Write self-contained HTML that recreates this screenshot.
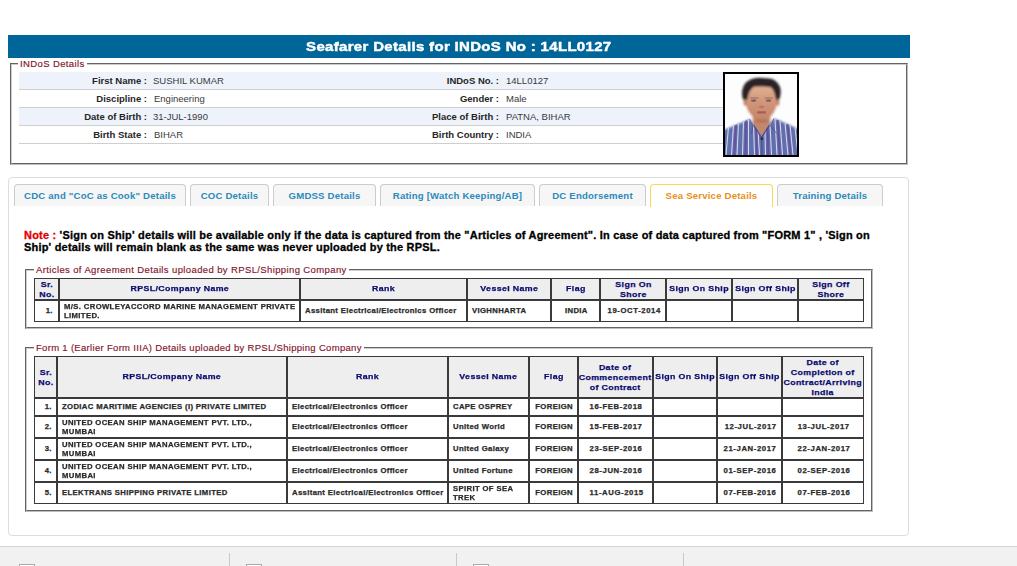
<!DOCTYPE html>
<html>
<head>
<meta charset="utf-8">
<title>Seafarer Details</title>
<style>
html,body{margin:0;padding:0;background:#fff;}
body{width:1017px;height:566px;overflow:hidden;position:relative;font-family:"Liberation Sans",sans-serif;color:#222;}
.a{position:absolute;}
.v{display:inline-block;white-space:nowrap;transform-origin:50% 50%;}
/* header */
#bar{left:8px;top:35px;width:902px;height:23px;background:#006699;}
#title{left:0;top:0;width:902px;height:23px;line-height:23px;text-align:center;color:#fff;font-weight:bold;font-size:13px;}
#tt{letter-spacing:.3px;transform:scaleX(1.15);-webkit-text-stroke:.45px #fff;}
/* fieldsets */
.fs{border:1px solid;border-color:#646464 #bdbdbd #bdbdbd #646464;box-sizing:border-box;}
.fs::after{content:"";position:absolute;left:0;top:0;right:0;bottom:0;border:1px solid;border-color:#cccccc #646464 #646464 #cccccc;}
.fs i{position:absolute;display:block;}
.lg{background:#fff;color:#84142c;-webkit-text-stroke-width:.15px;font-size:9.5px;letter-spacing:.38px;line-height:12px;white-space:nowrap;padding:0 2px;}
/* details rows */
.row{left:19px;width:704px;height:17px;border-bottom:1px solid #cfcfcf;font-size:9.5px;line-height:17px;}
.row.s{background:#eef3fb;}
.row b{position:absolute;right:0;top:0;color:#262626;white-space:nowrap;}
.row span{position:absolute;top:0;color:#3a3a3a;white-space:nowrap;}
/* tabs */
#panel{left:8px;top:177px;width:901px;height:359px;border:1px solid #ddd;border-radius:4px;box-sizing:border-box;}
.tab{top:184px;height:22px;box-sizing:border-box;border:1px solid #ccc;border-bottom:0;border-radius:4px 4px 0 0;background:#f6f6f6;color:#2b8aba;font-weight:bold;font-size:9.6px;letter-spacing:.2px;line-height:22px;text-align:center;white-space:nowrap;}
.tab.on{background:#fff;border-color:#fbd850;color:#e8901c;height:23px;}
/* note */
#note{left:24px;top:230px;width:900px;font-weight:bold;font-size:10.2px;line-height:11.6px;color:#000;letter-spacing:.2px;transform:translateY(-.2px) scaleX(1.076);transform-origin:0 0;-webkit-text-stroke-width:.3px;white-space:nowrap;}
#note em{font-style:normal;color:#e00000;}
/* tables */
table{border-collapse:separate;border-spacing:0;table-layout:fixed;position:absolute;}
td,th{border:1px solid #3a3a3a;padding:0;box-sizing:border-box;font-weight:bold;}
th{background:#eee;color:#0a0a6e;font-size:8px;line-height:10px;text-align:center;}
td{background:#fff;color:#2a2a2a;font-size:7px;line-height:9px;text-align:left;padding-left:4px;}
td.c{text-align:center;padding-left:2px;}
td.n{padding-left:6px;}
th .v,td .v{-webkit-text-stroke-width:.25px;letter-spacing:.33px;transform:scaleX(1.1);vertical-align:middle;}
td .v{transform-origin:0 50%;}
td.c .v{transform-origin:50% 50%;}
td .o{transform:translateY(-1px) scaleX(1.1);}
th .m{transform:translateY(.7px) scaleX(1.1);}
td .d{letter-spacing:.55px;}
/* bottom bar */
#bot{left:0;top:546px;width:1017px;height:20px;background:#f1f1f1;border-top:1px solid #d4d4d4;box-sizing:border-box;}
.sep{top:553px;width:1px;height:13px;background:#c8c8c8;}
.cb{top:564px;width:16px;height:4px;border:1px solid #a9a9a9;background:#fff;box-sizing:border-box;}
</style>
</head>
<body>

<!-- header bar -->
<div id="bar" class="a"><div id="title" class="a"><span class="v" id="tt">Seafarer Details for INDoS No : 14LL0127</span></div></div>

<!-- INDoS details fieldset -->
<div class="a fs" id="fs1" style="left:10px;top:63px;width:898px;height:102px;"></div>
<div class="a lg" style="left:18px;top:58px;">INDoS Details</div>

<div class="a row s" style="top:72px;"><b style="right:576px;">First Name :</b><span style="left:134px;">SUSHIL KUMAR</span><b style="right:224px;">INDoS No. :</b><span style="left:487px;">14LL0127</span></div>
<div class="a row" style="top:90px;"><b style="right:576px;">Discipline :</b><span style="left:135px;">Engineering</span><b style="right:224px;">Gender :</b><span style="left:487px;">Male</span></div>
<div class="a row s" style="top:108px;"><b style="right:576px;">Date of Birth :</b><span style="left:134px;">31-JUL-1990</span><b style="right:224px;">Place of Birth :</b><span style="left:487px;">PATNA, BIHAR</span></div>
<div class="a row" style="top:126px;"><b style="right:576px;">Birth State :</b><span style="left:135px;">BIHAR</span><b style="right:224px;">Birth Country :</b><span style="left:487px;">INDIA</span></div>

<!-- photo -->
<div class="a" id="photo" style="left:723px;top:72px;width:76px;height:85px;background:#000;">
<svg class="a" style="left:2px;top:2px;" width="72" height="81" viewBox="0 0 72 81">
<defs>
<filter id="bl" x="-10%" y="-10%" width="120%" height="120%"><feGaussianBlur stdDeviation="0.8"/></filter>
<filter id="bs" x="-10%" y="-10%" width="120%" height="120%"><feGaussianBlur stdDeviation="0.55"/></filter>
<clipPath id="shirt"><path d="M0 55.5 C8 52 17 48.5 24.5 45 L28 50 L36.5 63 L45 50 L49 44.5 C57 47.5 65 51 72 54.5 L72 81 L0 81 Z"/></clipPath>
<linearGradient id="fg" x1="0" y1="0" x2="0" y2="1"><stop offset="0" stop-color="#e2b092"/><stop offset=".45" stop-color="#d2967a"/><stop offset="1" stop-color="#c4866a"/></linearGradient>
</defs>
<rect width="72" height="81" fill="#fdfdfd"/>
<g filter="url(#bl)">
<!-- neck -->
<path d="M27.5 38 L28 50 L36.5 63 L45 50 L45.5 38 Z" fill="#c4876a"/>
<!-- shirt -->
<path d="M-2 56.3 C8 52 17 48.5 24.5 45 L28 50 L36.5 63 L45 50 L49 44.5 C57 47.5 65 51 74 55.5 L74 84 L-2 84 Z" fill="#6070ae"/>
<!-- hair -->
<path d="M19 27 C15.5 22 16.5 11 23 7 C28 3.5 34 3.2 40 4.2 C47 3.6 53 7 55 13 C56.5 18 55.5 23 53.5 27 C52 25 51.5 22 51 19 L22 19 C21 22 20.5 25 19 27 Z" fill="#2b2325"/>
<!-- face -->
<path d="M20.5 24 C21 19 24 13.5 29 12.8 C34 12.2 41 12.2 46 13.2 C50 14.5 52 19 52.3 24 C52.8 31 50 39 44.5 43.5 C40.5 46.5 33 46.5 29 43.5 C23 39 20 31 20.5 24 Z" fill="url(#fg)"/>
<!-- side hair over temples -->
<path d="M19 27 C18.5 21 20.5 15.5 24.5 13 C26 12.3 28.5 12.3 29 12.8 C25.5 15 23.5 19 22.8 23.5 C22.3 25.5 21 27.5 19 27 Z" fill="#2b2325"/>
<path d="M53.5 27 C54.5 21 53 15.5 49 13.5 C47.5 13 46 13 46 13.2 C48.5 15.5 50 19.5 50.6 23.5 C51 25.5 52 27.5 53.5 27 Z" fill="#2b2325"/>
<!-- ears -->
<ellipse cx="20" cy="28.5" rx="1.4" ry="3.2" fill="#bd8163"/>
<ellipse cx="53" cy="28.5" rx="1.4" ry="3.2" fill="#bd8163"/>
<!-- chin shadow -->
<ellipse cx="36.5" cy="47" rx="7" ry="1.6" fill="#a9694f" opacity=".7"/>
</g>
<g filter="url(#bs)">
<!-- brows / eyes -->
<rect x="25" y="23.4" width="8.5" height="1.1" rx=".5" fill="#5a3a30" opacity=".5"/>
<rect x="39.5" y="23.4" width="8.5" height="1.1" rx=".5" fill="#5a3a30" opacity=".5"/>
<ellipse cx="28.6" cy="26.6" rx="2.7" ry="1.2" fill="#6b4a58" opacity=".85"/>
<ellipse cx="43.6" cy="26.6" rx="2.7" ry="1.2" fill="#6b4a58" opacity=".85"/>
<!-- nose shadow -->
<ellipse cx="36.5" cy="33" rx="2.6" ry="1.2" fill="#b07258" opacity=".8"/>
<!-- mouth -->
<rect x="32" y="37.3" width="9" height="2.1" rx="1" fill="#a85c5e"/>
<!-- stripes -->
<g clip-path="url(#shirt)" stroke="#d6d9ea" stroke-width="1.05" fill="none">
<path d="M3.5 53 L1 81"/><path d="M8.5 51 L6.5 81"/><path d="M13.5 49 L12 81"/><path d="M18.5 47 L17.5 81"/><path d="M23.5 45 L23.5 81"/><path d="M28.5 50 L29.5 81"/><path d="M33 57 L34.5 81"/>
<path d="M40 57 L40.5 81"/><path d="M45 50 L46.5 81"/><path d="M50 45 L52 81"/><path d="M55 47 L57.5 81"/><path d="M60 49 L63 81"/><path d="M65 51 L68 81"/><path d="M70 53 L73 81"/>
</g>
<g clip-path="url(#shirt)" stroke="#6a479a" stroke-width="1.9" fill="none" opacity=".75">
<path d="M11 50 L9.3 81"/><path d="M21 46 L20.5 81"/><path d="M31 53 L32 81"/><path d="M42.7 53 L43.3 81"/><path d="M52.7 46 L54.8 81"/><path d="M62.6 50 L65.6 81"/>
</g>
<!-- collar edges -->
<path d="M24.5 45 L28 52 L26.5 60 " stroke="#454a8c" stroke-width="1" fill="none" opacity=".7"/>
<path d="M49 44.5 L45.5 52 L51.5 59.5" stroke="#454a8c" stroke-width="1" fill="none" opacity=".7"/>
<path d="M28.5 51 L36.5 63.5 L44.5 51" stroke="#3b3f7c" stroke-width="1.3" fill="none" opacity=".8"/>
<circle cx="36.8" cy="64.8" r="1.3" fill="#22203a"/>
<path d="M36.8 66 L37 81" stroke="#414583" stroke-width="1.1" opacity=".8"/>
</g>
</svg>
</div>

<!-- tabs panel -->
<div id="panel" class="a"></div>
<div class="a tab" style="left:14px;width:172px;">CDC and "CoC as Cook" Details</div>
<div class="a tab" style="left:190px;width:79px;">COC Details</div>
<div class="a tab" style="left:273px;width:103px;">GMDSS Details</div>
<div class="a tab" style="left:380px;width:155px;">Rating [Watch Keeping/AB]</div>
<div class="a tab" style="left:539px;width:107px;">DC Endorsement</div>
<div class="a tab on" style="left:650px;width:123px;">Sea Service Details</div>
<div class="a tab" style="left:777px;width:106px;">Training Details</div>

<!-- note -->
<div id="note" class="a"><em>Note :</em> 'Sign on Ship' details will be available only if the data is captured from the "Articles of Agreement". In case of data captured from "FORM 1" , 'Sign on<br>Ship' details will remain blank as the same was never uploaded by the RPSL.</div>

<!-- Articles of Agreement -->
<div class="a fs" id="fs2" style="left:25px;top:269px;width:848px;height:60px;"></div>
<div class="a lg" style="left:34px;top:264px;">Articles of Agreement Details uploaded by RPSL/Shipping Company</div>
<table id="t1" style="left:34px;top:278px;width:830px;">
<colgroup><col style="width:25px"><col style="width:241px"><col style="width:167px"><col style="width:84px"><col style="width:49px"><col style="width:66px"><col style="width:66px"><col style="width:66px"><col style="width:66px"></colgroup>
<tr style="height:22px;"><th><span class="v m">Sr.<br>No.</span></th><th><span class="v">RPSL/Company Name</span></th><th><span class="v">Rank</span></th><th><span class="v">Vessel Name</span></th><th><span class="v">Flag</span></th><th><span class="v m">Sign On<br>Shore</span></th><th><span class="v">Sign On Ship</span></th><th><span class="v">Sign Off Ship</span></th><th><span class="v m">Sign Off<br>Shore</span></th></tr>
<tr style="height:22px;"><td class="c n"><span class="v o">1.</span></td><td><span class="v">M/S. CROWLEYACCORD MARINE MANAGEMENT PRIVATE<br>LIMITED.</span></td><td><span class="v o">Assitant Electrical/Electronics Officer</span></td><td><span class="v o">VIGHNHARTA</span></td><td class="c"><span class="v o">INDIA</span></td><td class="c"><span class="v o d">19-OCT-2014</span></td><td></td><td></td><td></td></tr>
</table>

<!-- Form 1 -->
<div class="a fs" id="fs3" style="left:25px;top:347px;width:848px;height:165px;"></div>
<div class="a lg" style="left:34px;top:342px;letter-spacing:.31px;">Form 1 (Earlier Form IIIA) Details uploaded by RPSL/Shipping Company</div>
<table id="t2" style="left:34px;top:356px;width:830px;">
<colgroup><col style="width:23px"><col style="width:230px"><col style="width:161px"><col style="width:81px"><col style="width:49px"><col style="width:75px"><col style="width:64px"><col style="width:65px"><col style="width:82px"></colgroup>
<tr style="height:42px;"><th><span class="v m">Sr.<br>No.</span></th><th><span class="v">RPSL/Company Name</span></th><th><span class="v">Rank</span></th><th><span class="v">Vessel Name</span></th><th><span class="v">Flag</span></th><th><span class="v m">Date of<br>Commencement<br>of Contract</span></th><th><span class="v">Sign On Ship</span></th><th><span class="v">Sign Off Ship</span></th><th><span class="v m">Date of<br>Completion of<br>Contract/Arriving<br>India</span></th></tr>
<tr style="height:18px;"><td class="c n"><span class="v o">1.</span></td><td><span class="v o">ZODIAC MARITIME AGENCIES (I) PRIVATE LIMITED</span></td><td><span class="v o">Electrical/Electronics Officer</span></td><td><span class="v o">CAPE OSPREY</span></td><td class="c"><span class="v o">FOREIGN</span></td><td class="c"><span class="v o d">16-FEB-2018</span></td><td></td><td></td><td></td></tr>
<tr style="height:22px;"><td class="c n"><span class="v o">2.</span></td><td><span class="v">UNITED OCEAN SHIP MANAGEMENT PVT. LTD.,<br>MUMBAI</span></td><td><span class="v o">Electrical/Electronics Officer</span></td><td><span class="v o">United World</span></td><td class="c"><span class="v o">FOREIGN</span></td><td class="c"><span class="v o d">15-FEB-2017</span></td><td></td><td class="c"><span class="v o d">12-JUL-2017</span></td><td class="c"><span class="v o d">13-JUL-2017</span></td></tr>
<tr style="height:22px;"><td class="c n"><span class="v o">3.</span></td><td><span class="v">UNITED OCEAN SHIP MANAGEMENT PVT. LTD.,<br>MUMBAI</span></td><td><span class="v o">Electrical/Electronics Officer</span></td><td><span class="v o">United Galaxy</span></td><td class="c"><span class="v o">FOREIGN</span></td><td class="c"><span class="v o d">23-SEP-2016</span></td><td></td><td class="c"><span class="v o d">21-JAN-2017</span></td><td class="c"><span class="v o d">22-JAN-2017</span></td></tr>
<tr style="height:22px;"><td class="c n"><span class="v o">4.</span></td><td><span class="v">UNITED OCEAN SHIP MANAGEMENT PVT. LTD.,<br>MUMBAI</span></td><td><span class="v o">Electrical/Electronics Officer</span></td><td><span class="v o">United Fortune</span></td><td class="c"><span class="v o">FOREIGN</span></td><td class="c"><span class="v o d">28-JUN-2016</span></td><td></td><td class="c"><span class="v o d">01-SEP-2016</span></td><td class="c"><span class="v o d">02-SEP-2016</span></td></tr>
<tr style="height:22px;"><td class="c n"><span class="v o">5.</span></td><td><span class="v o">ELEKTRANS SHIPPING PRIVATE LIMITED</span></td><td><span class="v o">Assitant Electrical/Electronics Officer</span></td><td><span class="v">SPIRIT OF SEA<br>TREK</span></td><td class="c"><span class="v o">FOREIGN</span></td><td class="c"><span class="v o d">11-AUG-2015</span></td><td></td><td class="c"><span class="v o d">07-FEB-2016</span></td><td class="c"><span class="v o d">07-FEB-2016</span></td></tr>
</table>

<!-- bottom bar -->
<div id="bot" class="a"></div>
<div class="a sep" style="left:229px;"></div>
<div class="a sep" style="left:456px;"></div>
<div class="a sep" style="left:683px;"></div>
<div class="a cb" style="left:19px;"></div>
<div class="a cb" style="left:246px;"></div>
<div class="a cb" style="left:473px;"></div>

</body>
</html>
